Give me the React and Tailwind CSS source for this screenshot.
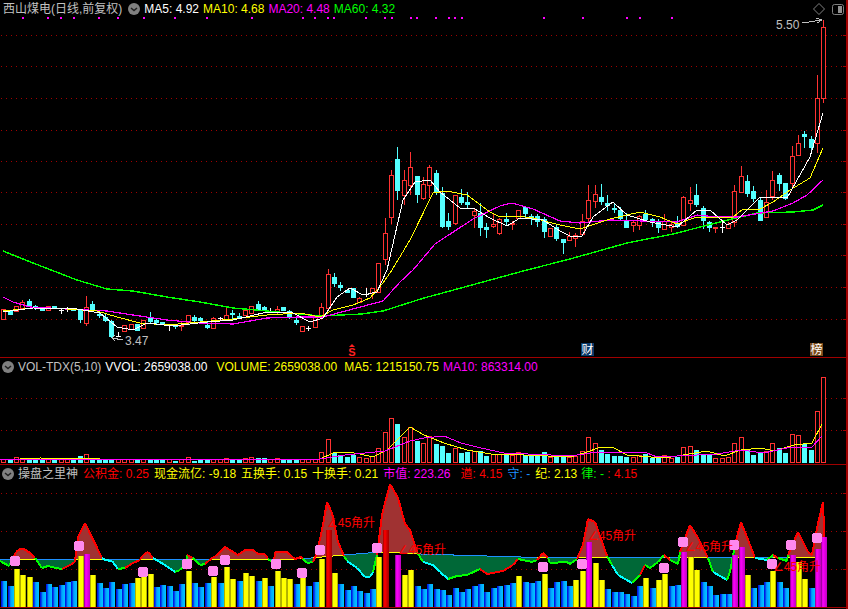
import React from 'react';

const RED = '#ff3232';
const CYAN = '#54ffff';
const GRID = '#a00000';
const xOf = (i) => Math.round(3.4 + 6.356 * i);

// colour, body top, body bottom, wick high, wick low (pixel rows of the photo)
const candles = [
  ['r',309,319],['c',310,315],['r',306,311],['r',302,308,300,308],['c',301,306,299,306],['c',306,308,305,310],['c',308,311],['r',306,310],['c',306,309],['w',310,310,308,314],
  ['w',309,309,307,312],['c',308,311],['c',309,320,309,323],['r',307,323,296,326],['c',304,310,301,311],['c',314,316,311,318],['c',317,321,313,322],['c',321,337,320,338],['w',336,336,332,337],['r',325,331],
  ['r',324,329],['c',324,331],['r',320,328],['c',317,322,312,323],['c',320,323,319,325],['c',322,324],['w',325,325,324,331],['c',326,327,324,329],['r',325,326,322,331],['r',315,322],
  ['c',317,321,315,322],['c',318,321,317,323],['c',325,328,321,329],['r',318,328,317,329],['w',318,318,317,321],['r',315,319,308,320],['c',313,315,310,319],['c',316,318,313,319],['r',310,315],['r',306,313],
  ['c',304,310,301,311],['c',307,310,306,311],['w',311,311,308,313],['r',309,311,306,315],['c',307,311],['c',311,317,310,319],['c',320,323,317,325],['r',326,331],['w',328,328,326,331],['r',317,327],
  ['r',307,316,303,316],['r',274,308,269,311],['c',277,284,273,287],['c',285,288,282,291],['c',290,293,289,293],['c',288,298],['r',298,302,297,303],['w',294,294,288,297],['r',288,293,288,299],['r',263,292],
  ['r',233,259,218,265],['r',175,217,170,224],['c',159,191,147,200],['r',180,195,170,205],['r',167,185,152,195],['c',176,195,176,203],['r',184,198,177,200],['r',167,185,165,198],['c',173,192,170,195],['c',193,227,187,228],
  ['c',221,227,213,230],['r',195,223,195,225],['c',197,203,189,205],['c',202,205,192,208],['r',211,215,209,228],['c',213,228,203,236],['c',227,230,223,238],['r',224,226,213,228],['r',219,233,218,235],['c',219,222,213,225],
  ['r',223,224,221,230],['r',210,218,210,219],['c',207,214,206,217],['c',216,219,214,225],['c',216,222,214,227],['c',219,232,217,238],['r',228,236],['c',227,239,225,241],['c',239,243,239,254],['r',236,240,232,240],
  ['r',235,238,233,247],['r',221,234,214,235],['r',200,218,185,222],['r',194,201,185,208],['c',197,202,184,205],['c',203,206,195,211],['c',208,210,203,213],['c',210,219,207,220],['c',220,228,213,228],['r',222,225,220,232],
  ['r',216,225,215,230],['c',214,220,210,221],['c',219,223,218,227],['c',222,228,219,233],['r',221,229,214,229],['r',224,227,222,232],['c',224,227,216,228],['r',197,225,196,226],['r',200,203,187,211],['c',195,205,184,207],
  ['c',208,221,206,229],['c',222,228,221,232],['r',227,228,227,233],['w',227,227,222,233],['r',224,228,222,229],['r',191,222,185,227],['r',176,192,166,192],['c',181,194,175,197],['c',191,199,186,202],['c',200,221,197,221],
  ['r',202,217,190,217],['r',180,196,171,200],['c',175,184,173,191],['c',183,199,183,200],['r',156,183,146,187],['r',143,155,135,156],['c',134,137,131,148],['c',139,148,136,153],['r',98,143,75,153],['r',27,98,20,103],
];

const ma60 = [[3,251],[33,263],[77,280],[107,289],[133,291],[167,297],[200,302],[233,308],[267,311],[300,314],[320,316],[362,314],[383,311],[424,298],[527,270],[570,259],[627,243],[673,234],[720,222],[757,213],[793,212],[813,210],[823,205]];
const ma20 = [[3,297],[13,302],[30,307],[67,309],[107,311],[133,315],[167,320],[200,323],[233,324],[267,318],[300,317],[323,317],[353,309],[383,301],[400,282],[413,270],[435,244],[473,219],[500,206],[512,203],[533,209],[560,221],[580,223],[610,220],[677,222],[697,215],[717,217],[737,217],[773,211],[793,203],[807,195],[823,180]];
const ma10 = [[3,311],[33,308],[67,309],[97,311],[117,317],[140,323],[167,325],[200,322],[233,319],[267,315],[300,313],[320,317],[333,310],[353,305],[370,298],[383,283],[392,270],[410,240],[433,193],[447,191],[467,195],[490,212],[500,217],[517,216],[533,218],[560,225],[580,229],[610,219],[640,212],[660,217],[677,224],[697,217],[717,217],[733,217],[743,209],[760,209],[773,202],[790,190],[810,178],[823,148]];
const ma5 = [[3,312],[33,308],[77,309],[100,313],[117,327],[133,330],[147,323],[173,326],[207,322],[233,320],[267,312],[293,313],[310,322],[323,318],[337,297],[350,288],[363,295],[377,292],[387,270],[403,200],[415,182],[430,180],[440,192],[460,208],[473,208],[490,218],[507,226],[520,218],[543,220],[560,231],[570,236],[582,236],[593,217],[613,202],[627,215],[650,222],[677,227],[697,210],[710,210],[727,225],[737,220],[760,197],[787,198],[810,157],[823,113]];

const dots = [22,47,60,73,98,117,143,174,206,251,302,314,327,333,365,384,391,410,416,435,448,454,461,543,582,626,639,671];

const volH = [3,3,5,3,3,3,3,3,3,3,3,3,7,8,4,3,3,4,3,3,3,4,3,4,4,3,3,2,3,5,2,3,3,3,3,4,3,4,4,5,5,5,3,4,4,3,3,3,3,3,10,23,10,8,6,8,5,4,6,14,30,44,39,25,35,22,19,26,19,17,10,14,10,11,11,12,7,8,8,8,7,10,8,8,8,11,5,8,8,5,6,11,25,19,13,9,7,7,6,5,7,9,5,6,7,4,6,15,16,13,9,8,4,4,5,19,25,14,8,10,11,19,15,10,28,27,19,13,51,85];
const volMa5 = [[0,460],[40,458],[100,459],[160,460],[240,459],[320,459],[333,453],[347,452],[360,454],[373,457],[387,450],[410,427],[424,435],[444,443],[467,450],[491,454],[524,455],[571,457],[587,452],[601,447],[614,448],[627,455],[651,457],[671,457],[707,451],[724,456],[741,450],[761,448],[774,451],[794,445],[812,443],[822,424]];
const volMa10 = [[0,459],[320,459],[345,455],[385,451],[410,441],[424,438],[444,436],[461,443],[481,448],[504,453],[551,455],[571,456],[597,452],[647,453],[657,457],[717,454],[741,450],[764,453],[791,447],[812,447],[822,436]];

// b blue, y yellow, m magenta, r red, n nothing
const force = 'b26 b21 y38 y32 y30 b25 b15 b23 b20 b22 b25 b26 y51 m53 y32 b24 b19 b25 b18 b23 b24 y29 y30 y33 b20 b22 b21 b16 b23 y36 b24 b20 b24 y30 b24 y40 y28 b26 y34 y31 b26 y29 b21 y36 y29 y28 b23 y29 b21 b25 y48 r77 y34 b23 b17 b21 b16 b14 b18 y50 r77 n0 m52 y32 y37 b21 b18 b23 b18 b17 b12 b19 b15 b18 b21 b23 b15 b19 b21 b22 b24 y31 b25 b24 b26 y33 b19 b25 b26 b21 y27 y36 m65 y44 y27 b18 b15 b15 b13 b11 b21 y29 b19 y27 y33 b21 b22 m55 y50 y37 b25 b21 b12 b13 b13 m52 m60 y32 b19 b22 b25 y36 b25 b19 m52 y45 y28 b19 m58 m70'.split(' ');

const flow = [[0,561],[9,566],[13,559],[16,552],[20,549],[24,549],[30,553],[35,558],[42,568],[48,566],[56,568],[62,569],[70,565],[75,562],[76,553],[78,537],[85,523],[102,558],[105,560],[112,561],[118,569],[125,568],[133,563],[140,560],[143,555],[148,552],[153,558],[165,565],[175,572],[180,570],[186,563],[187,555],[193,558],[200,565],[205,564],[212,558],[216,556],[225,547],[238,555],[245,550],[253,550],[258,554],[265,554],[268,559],[274,563],[275,552],[287,552],[290,555],[295,559],[301,557],[303,559],[307,563],[313,562],[317,553],[323,525],[327,502],[332,513],[338,542],[344,556],[347,561],[357,568],[365,577],[370,577],[373,572],[377,555],[382,515],[390,484],[398,498],[405,524],[410,530],[417,552],[423,562],[433,565],[440,572],[448,579],[457,576],[467,575],[480,569],[487,574],[503,571],[513,565],[518,559],[523,560],[532,562],[537,560],[543,553],[548,558],[550,563],[567,562],[570,564],[577,559],[583,545],[588,519],[595,522],[607,556],[612,565],[618,575],[632,583],[640,575],[645,565],[650,568],[658,562],[664,555],[670,560],[678,564],[680,552],[690,525],[698,538],[708,558],[713,572],[727,580],[730,572],[735,545],[741,522],[752,550],[755,558],[767,560],[773,555],[778,558],[787,561],[788,555],[798,532],[808,552],[812,555],[817,528],[823,502],[825,557]];

const basePts = [[0,559],[300,559],[344,555],[380,552],[420,554],[520,557],[600,558],[848,557]];
const baseAt = (x) => {
  for (let i = 1; i < basePts.length; i++) {
    const [x0, y0] = basePts[i - 1];
    const [x1, y1] = basePts[i];
    if (x <= x1) return y0 + ((y1 - y0) * (x - x0)) / (x1 - x0);
  }
  return 557;
};

const cyanSpans = [[103,117],[155,176],[347,372],[423,450],[612,632],[713,727],[755,767]];
const redSpans = [[60,75],[127,148],[205,215],[480,518],[640,645]];
const inSpans = (x, spans) => spans.some(([a, b]) => x >= a && x <= b);

const pinks = [[15,561],[79,546],[143,572],[187,564],[213,571],[225,560],[276,564],[302,573],[320,550],[377,548],[543,567],[582,564],[664,568],[683,542],[734,545],[772,564],[791,545],[817,538]];
const labels = [[327,527],[398,554],[588,540],[685,551],[773,571]];

const pts = (list) => list.map((p) => p.join(',')).join(' ');

const Grid = ({ rows }) =>
  rows.map((y) => (
    <g key={y}>
      <line x1="1" x2="846" y1={y + 0.5} y2={y + 0.5} stroke={GRID} strokeDasharray="1 4" shapeRendering="auto" />
      <line x1="843" x2="846" y1={y + 0.5} y2={y + 0.5} stroke={GRID} />
    </g>
  ));

const Line = ({ list, color, width = 1 }) => <polyline points={pts(list)} fill="none" stroke={color} strokeWidth={width} />;

const Candle = ({ c, i }) => {
  const [kind, top, bottom, hi = top, lo = bottom] = c;
  const x = xOf(i);
  if (kind === 'w') {
    return (
      <g stroke="#fff">
        <line x1={x + 0.5} x2={x + 0.5} y1={hi} y2={lo} />
        <line x1={x - 2} x2={x + 3} y1={top + 0.5} y2={top + 0.5} />
      </g>
    );
  }
  const color = kind === 'r' ? RED : CYAN;
  return (
    <g>
      <line x1={x + 0.5} x2={x + 0.5} y1={hi} y2={lo} stroke={color} />
      {kind === 'r' ? (
        <rect x={x - 1.5} y={top + 0.5} width="4" height={Math.max(bottom - top, 1)} fill="#000" stroke={color} />
      ) : (
        <rect x={x - 2} y={top} width="5" height={Math.max(bottom - top, 1)} fill={color} />
      )}
    </g>
  );
};

const Chevron = () => (
  <svg width="12" height="12" viewBox="0 0 12 12" className="shrink-0">
    <circle cx="6" cy="6" r="6" fill="#808080" />
    <path d="M3 5l3 2.5L9 5" fill="none" stroke="#202020" strokeWidth="1.5" />
  </svg>
);

const Item = ({ className, children }) => <span className={`whitespace-pre ${className}`}>{children}</span>;

const PriceChart = () => (
  <svg width="846" height="339" viewBox="0 18 846 339" shapeRendering="crispEdges" className="block overflow-visible">
    <Grid rows={[35, 66, 98, 130, 161, 192, 224, 255, 287, 319]} />
    {dots.map((x) => (
      <rect key={x} x={x} y="17" width="2" height="2" fill="#ff00ff" />
    ))}
    {candles.map((c, i) => (
      <Candle key={i} c={c} i={i} />
    ))}
    <Line list={ma60} color="#00ff00" width={1.4} />
    <Line list={ma20} color="#ff00ff" width={1.2} />
    <Line list={ma10} color="#ffff00" />
    <Line list={ma5} color="#ffffff" />
    <g fill="#c0c0c0" fontFamily="Liberation Sans" fontSize="12">
      <text x="776" y="29">5.50</text>
      <text x="125" y="345">3.47</text>
    </g>
    <path d="M802 23L822 20M816 18L822 20L817 23" fill="none" stroke="#c0c0c0" />
    <path d="M112 338L123 340M115 335L112 338L115 341" fill="none" stroke="#c0c0c0" />
  </svg>
);

const VolumeChart = () => (
  <svg width="846" height="88" viewBox="0 376 846 88" shapeRendering="crispEdges" className="block">
    <Grid rows={[398, 430]} />
    {volH.map((h, i) => {
      const up = candles[i][0] !== 'c';
      const x = xOf(i);
      return up ? (
        <rect key={i} x={x - 1.5} y={462.5 - h} width="4" height={h} fill="#000" stroke={RED} />
      ) : (
        <rect key={i} x={x - 2} y={463 - h} width="5" height={h} fill={CYAN} />
      );
    })}
    <Line list={volMa5} color="#ffff00" />
    <Line list={volMa10} color="#ff00ff" />
  </svg>
);

const barFill = { b: 'url(#barBlue)', y: 'url(#barYellow)', m: 'url(#barMagenta)', r: 'url(#barRed)' };

const FlowChart = () => {
  const quads = [];
  const strokes = [];
  flow.forEach((p, i) => {
    if (!i) return;
    const a = flow[i - 1];
    const mx = (a[0] + p[0]) / 2;
    const up = (a[1] + p[1]) / 2 < baseAt(mx);
    quads.push(
      <polygon
        key={i}
        points={pts([a, p, [p[0], baseAt(p[0])], [a[0], baseAt(a[0])]])}
        fill={up ? '#a03232' : '#006837'}
      />,
    );
    let color = '#00ff00';
    if (up || inSpans(mx, redSpans)) color = '#ff0000';
    else if (inSpans(mx, cyanSpans)) color = '#00ffff';
    strokes.push(
      <g key={i}>
        <line x1={a[0]} y1={baseAt(a[0])} x2={p[0]} y2={baseAt(p[0])} stroke={up ? '#ffff00' : '#1e90ff'} />
        <line x1={a[0]} y1={a[1]} x2={p[0]} y2={p[1]} stroke={color} strokeWidth="2" />
      </g>,
    );
  });

  return (
    <svg width="846" height="124" viewBox="0 483 846 124" shapeRendering="crispEdges" className="block">
      <defs>
        <linearGradient id="barBlue">
          <stop offset="0" stopColor="#0000e0" />
          <stop offset="0.33" stopColor="#0060f0" />
          <stop offset="0.45" stopColor="#00a0ff" />
          <stop offset="1" stopColor="#00c8ff" />
        </linearGradient>
        <linearGradient id="barYellow">
          <stop offset="0" stopColor="#808000" />
          <stop offset="0.22" stopColor="#ffff00" />
          <stop offset="0.8" stopColor="#ffff00" />
          <stop offset="1" stopColor="#808000" />
        </linearGradient>
        <linearGradient id="barMagenta">
          <stop offset="0" stopColor="#800080" />
          <stop offset="0.3" stopColor="#ff00ff" />
          <stop offset="1" stopColor="#c000c0" />
        </linearGradient>
        <linearGradient id="barRed">
          <stop offset="0" stopColor="#a00000" />
          <stop offset="0.3" stopColor="#ff0000" />
          <stop offset="1" stopColor="#a00000" />
        </linearGradient>
      </defs>
      <Grid rows={[493, 531, 569]} />
      {quads}
      {strokes}
      {force.map((b, i) => {
        const h = Number(b.slice(1));
        if (!h) return null;
        return <rect key={i} x={xOf(i) - 2} y={607 - h} width="6" height={h} fill={barFill[b[0]]} />;
      })}
      {pinks.map(([x, y]) => (
        <g key={x} fill="#ff88ee">
          <rect x={x - 5} y={y - 4} width="10" height="8" />
          <rect x={x - 4} y={y - 5} width="8" height="10" />
        </g>
      ))}
      <g fill="#ff0000" fontFamily="Liberation Sans, DejaVu Sans, Noto Sans CJK SC, sans-serif" fontSize="12">
        {labels.map(([x, y]) => (
          <text key={x} x={x} y={y}>∠45角升</text>
        ))}
      </g>
    </svg>
  );
};

export default function App() {
  return (
    <div className="w-[848px] h-[609px] overflow-hidden bg-black border-r-2 border-[#a00000] text-[12px] leading-none font-['Liberation_Sans','Noto_Sans_CJK_SC',sans-serif]">
      <section className="relative h-[358px] border-b border-[#a00000]">
        <header className="h-[18px] flex items-center pl-[3px] pr-[2px]">
          <Item className="text-[#c0c0c0]">西山煤电(日线,前复权)</Item>
          <span className="ml-[6px] mr-1"><Chevron /></span>
          <div className="flex gap-1">
            <Item className="text-white">MA5: 4.92</Item>
            <Item className="text-[#ffff00]">MA10: 4.68</Item>
            <Item className="text-[#ff00ff]">MA20: 4.48</Item>
            <Item className="text-[#00ff00]">MA60: 4.32</Item>
          </div>
          <div className="ml-auto flex items-center gap-[7px]">
            <svg width="12" height="12" viewBox="0 0 12 12"><path d="M6 .5L11.5 6L6 11.5L.5 6z" fill="none" stroke="#808080" /></svg>
            <svg width="12" height="11" viewBox="0 0 12 11"><rect x=".5" y=".5" width="11" height="10" rx="2" fill="none" stroke="#808080" /><rect x="6" y="2" width="4" height="7" fill="#909090" /></svg>
          </div>
        </header>
        <PriceChart />
        <div className="absolute left-[347px] top-[344px] w-[10px] flex flex-col items-center text-[#ff2020] font-bold text-[11px]">
          <span className="w-0 h-0 border-x-[3px] border-x-transparent border-b-[3px] border-b-[#ff2020]" />
          <span>S</span>
        </div>
        <span className="absolute left-[581px] top-[343px] w-[13px] h-[13px] bg-[#0a3a6a] text-white flex items-center justify-center">财</span>
        <span className="absolute left-[810px] top-[343px] w-[13px] h-[13px] bg-[#7a4a1a] text-white flex items-center justify-center">榜</span>
      </section>

      <section className="h-[107px] border-b border-[#a00000]">
        <header className="h-[18px] flex items-center pl-[2px]">
          <Chevron />
          <Item className="ml-1 text-[#c0c0c0]">VOL-TDX(5,10)</Item>
          <Item className="ml-1 text-white">VVOL: 2659038.00</Item>
          <Item className="ml-[9px] text-[#ffff00]">VOLUME: 2659038.00</Item>
          <Item className="ml-[7px] text-[#ffff00]">MA5: 1215150.75</Item>
          <Item className="ml-[4px] text-[#ff00ff]">MA10: 863314.00</Item>
        </header>
        <VolumeChart />
      </section>

      <section className="h-[143px] border-b border-[#a00000]">
        <header className="h-[18px] flex items-center pl-[2px]">
          <Chevron />
          <Item className="ml-1 text-[#c0c0c0]">操盘之里神</Item>
          <Item className="ml-[5px] text-[#ff0000]">公积金: 0.25</Item>
          <Item className="ml-[5px] text-[#ffff00]">现金流亿: -9.18</Item>
          <Item className="ml-[5px] text-[#ffff00]">五换手: 0.15</Item>
          <Item className="ml-[5px] text-[#ffff00]">十换手: 0.21</Item>
          <Item className="ml-[5px] text-[#ff00ff]">市值: 223.26</Item>
          <Item className="ml-[10px] text-[#ff0000]">遒: 4.15</Item>
          <Item className="ml-[5px] text-[#1e90ff]">守: -</Item>
          <Item className="ml-[5px] text-[#ffff00]">纪: 2.13</Item>
          <Item className="ml-[4px] text-[#00ff00]">律: -</Item>
          <Item className="text-[#ff0000]"> : 4.15</Item>
        </header>
        <FlowChart />
      </section>
    </div>
  );
}
